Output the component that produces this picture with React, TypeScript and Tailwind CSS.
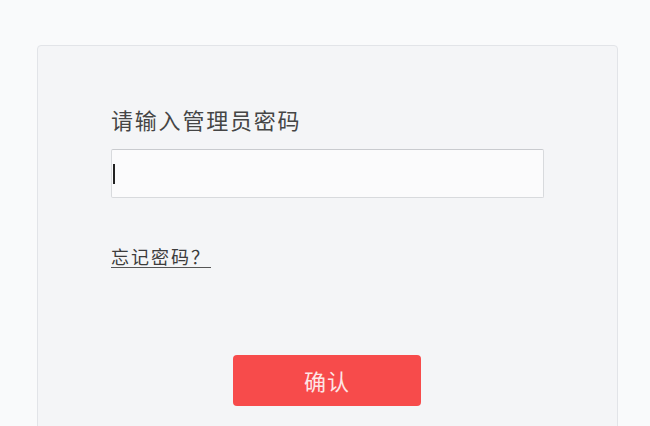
import React from "react";

export default function App() {
  return (
    <div
      className="w-[650px] h-[426px] overflow-hidden bg-[#f9fafb] pt-[45px] pl-[37px]"
      style={{ fontFamily: '"Noto Sans CJK SC", "Noto Sans", sans-serif' }}
    >
      <div className="w-[581px] h-[420px] rounded-[4px] border border-[#e2e4e8] bg-[#f4f5f7] pl-[73px] pt-[58px]">
        <div className="text-[22px] leading-[30px] tracking-[1.8px] text-[#454545]">请输入管理员密码</div>
        <div className="mt-[15px] w-[433px] h-[49px] rounded-[2px] border border-[#d8dadd] border-t-[#c9cbcf] bg-[#fbfbfc] flex items-center pl-[1px]">
          <span className="w-[2px] h-[20px] bg-[#222]" />
        </div>
        <div className="mt-[46px] text-[18px] leading-[24px] tracking-[2px] text-[#3c3c3c] underline underline-offset-[3px] decoration-[1px] decoration-[#555] inline-block">
          忘记密码？
        </div>
        <div className="mt-[86px] ml-[122px] w-[188px] h-[51px] rounded-[4px] bg-[#f74b4b] flex items-center justify-center text-[22px] tracking-[1px] text-[#fde6e6]">
          确认
        </div>
      </div>
    </div>
  );
}
